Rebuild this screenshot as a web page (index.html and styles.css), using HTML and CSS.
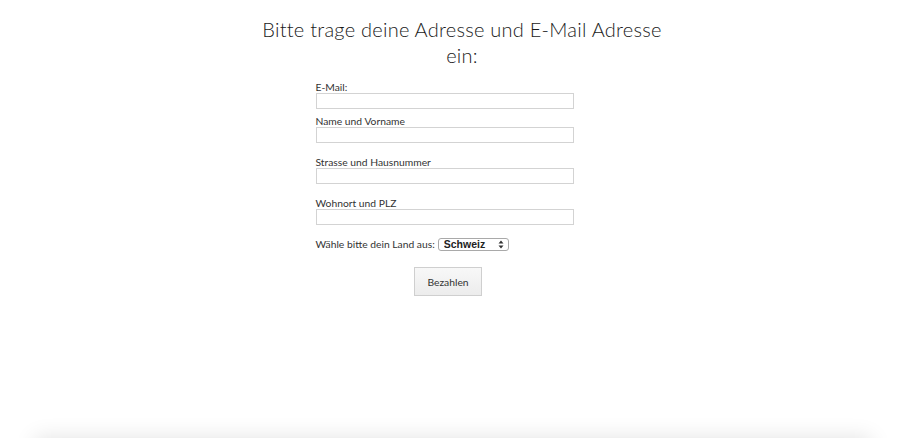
FILE: index.html
```html
<!DOCTYPE html>
<html lang="de">
<head>
<meta charset="utf-8">
<title>Adresse</title>
<link rel="stylesheet" href="styles.css">
</head>
<body>
<div class="page">
  <main class="main">
    <h1 class="title">Bitte trage deine Adresse und E-Mail Adresse ein:</h1>
    <form class="form">
      <div class="field first">
        <label class="label" for="email">E-Mail:</label>
        <input class="input" id="email" type="text">
      </div>
      <div class="field">
        <label class="label" for="name">Name und Vorname</label>
        <input class="input" id="name" type="text">
      </div>
      <div class="field">
        <label class="label" for="street">Strasse und Hausnummer</label>
        <input class="input" id="street" type="text">
      </div>
      <div class="field">
        <label class="label" for="city">Wohnort und PLZ</label>
        <input class="input" id="city" type="text">
      </div>
      <div class="country">
        <label class="label inline" for="land">Wähle bitte dein Land aus:</label>
        <span class="select-wrap">
          <select class="select" id="land">
            <option>Schweiz</option>
            <option>Deutschland</option>
            <option>Österreich</option>
          </select>
          <svg class="select-arrows" width="6" height="9" viewBox="0 0 6 9"><path d="M3 0.5 L5.5 3.5 H0.5 Z M3 8.5 L5.5 5.5 H0.5 Z" fill="#333"/></svg>
        </span>
      </div>
      <div class="actions">
        <button class="btn" type="button">Bezahlen</button>
      </div>
    </form>
  </main>
</div>
<footer class="footer"></footer>
</body>
</html>
```
FILE: styles.css
```css
html, body {
  margin: 0;
  padding: 0;
  background: #ffffff;
}
body {
  font-family: "Lato", "Noto Sans", sans-serif;
  color: #222;
}
.page {
  height: 438px;
  display: flex;
  flex-direction: column;
  align-items: center;
}
.main {
  display: flex;
  flex-direction: column;
  align-items: center;
  padding-right: 17px;
  width: 100%;
  box-sizing: border-box;
}
.title {
  margin: 16px 0 0 35px;
  width: 425px;
  font-size: 20px;
  font-weight: 300;
  line-height: 26px;
  text-align: center;
  letter-spacing: 0.25px;
  color: #1a1a1a;
}
.form {
  width: 258px;
  margin-top: 14px;
  display: flex;
  flex-direction: column;
}
.field {
  display: flex;
  flex-direction: column;
  margin-top: 14px;
}
.field.first {
  margin-top: 0;
}
.field.first + .field {
  margin-top: 7px;
}
.label {
  font-size: 10.3px;
  line-height: 11px;
  color: #333;
  margin-bottom: 0;
}
.input {
  box-sizing: border-box;
  width: 258px;
  height: 16px;
  border: 1px solid #d3d3d3;
  border-radius: 0;
  padding: 0 3px;
  margin: 0;
  background: #fff;
}
.country {
  margin-top: 13px;
  display: flex;
  align-items: center;
  gap: 3px;
}
.select-wrap {
  position: relative;
  display: inline-flex;
}
.select {
  appearance: none;
  -webkit-appearance: none;
  box-sizing: border-box;
  width: 71px;
  height: 13px;
  border: 1px solid #a9a9a9;
  border-radius: 3px;
  background: #fff;
  font-family: "Liberation Sans", Arial, sans-serif;
  font-size: 10.5px;
  font-weight: 700;
  color: #222;
  padding: 0 0 0 5px;
  line-height: 11px;
  margin: 0;
}
.select-arrows {
  position: absolute;
  right: 5px;
  top: 2px;
  pointer-events: none;
}
.actions {
  display: flex;
  justify-content: center;
  margin-top: 16px;
  padding-left: 7px;
}
.btn {
  width: 68px;
  height: 29px;
  border: 1px solid #cfcfcf;
  border-radius: 0;
  background: linear-gradient(#f8f8f8, #ececec);
  font-family: "Lato", "Noto Sans", sans-serif;
  font-size: 10.3px;
  color: #333;
  padding: 0;
}
.footer {
  height: 60px;
  margin: 0 35px;
  background: #fff;
  box-shadow: 0 0 22px rgba(0, 0, 0, 0.12);
}
```
